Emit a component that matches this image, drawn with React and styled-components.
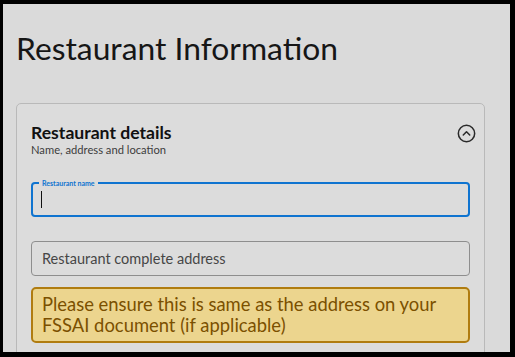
import React from 'react'
import styled, { createGlobalStyle } from 'styled-components'

const GlobalStyle = createGlobalStyle`
  html, body {
    margin: 0;
    padding: 0;
    background: #000;
  }
  * { box-sizing: border-box; }
`

export const Screen = styled.div`
  margin: 4px 5px 0 3px;
  height: 348px;
  overflow: hidden;
  background: #dadada;
  padding: 22px 25px 0 13px;
  font-family: Lato, "Open Sans", sans-serif;
`

export const PageTitle = styled.h1`
  margin: 0 0 33px 0;
  font-size: 31.8px;
  font-weight: 400;
  line-height: 44px;
  color: #161616;
`

export const Card = styled.section`
  border: 1px solid #b9b9b9;
  border-radius: 5px;
  padding: 19px 14px 20px 14px;
  background: #dcdcdc;
`

export const CardHeader = styled.div`
  display: flex;
  justify-content: space-between;
  align-items: flex-start;
  margin-bottom: 25px;
`

export const HeadText = styled.div`
  display: flex;
  flex-direction: column;
`

export const CardTitle = styled.h2`
  margin: 0;
  font-size: 17.6px;
  font-weight: 700;
  line-height: 20px;
  color: #111;
`

export const CardSub = styled.p`
  margin: 0;
  font-size: 11.2px;
  line-height: 14px;
  color: #3c3c3c;
`

export const ToggleButton = styled.button`
  border: none;
  background: none;
  padding: 0;
  margin: 0 -6px 0 0;
  width: 20px;
  height: 20px;
  display: flex;
  align-items: center;
  justify-content: center;
  cursor: pointer;
`

export const Field = styled.div`
  position: relative;
  height: ${p => p.$height || 34}px;
  border: ${p => (p.$focused ? '2px solid #0f74d0' : '1px solid #8e8e8e')};
  border-radius: 4px;
  display: flex;
  align-items: center;
  padding: 0 ${p => (p.$focused ? 8 : 10)}px;
  margin-bottom: ${p => p.$gap || 0}px;
`

export const FloatLabel = styled.span`
  position: absolute;
  top: -5px;
  left: 6px;
  padding: 0 3px;
  background: #dcdcdc;
  font-size: 7px;
  line-height: 8px;
  font-weight: 700;
  color: #0f74d0;
`

export const Caret = styled.span`
  width: 1px;
  height: 17px;
  background: #111;
`

export const Placeholder = styled.span`
  font-size: 14.5px;
  color: #464646;
`

export const Notice = styled.div`
  background: #ecd58e;
  border: 2px solid #b07c10;
  border-radius: 5px;
  padding: 5px 9px 5px 9px;
  color: #7b5000;
  font-size: 18.4px;
  line-height: 21px;
`

function ChevronCircle() {
  return (
    <svg width="19" height="19" viewBox="0 0 20 20" fill="none" stroke="#2a2a2a" strokeWidth="1.6" strokeLinecap="round" strokeLinejoin="round">
      <circle cx="10" cy="10" r="8.6" />
      <path d="M6.6 11.6 L10 8.2 L13.4 11.6" />
    </svg>
  )
}

function App() {
  return (
    <>
      <GlobalStyle />
      <Screen>
        <PageTitle>Restaurant Information</PageTitle>
        <Card>
          <CardHeader>
            <HeadText>
              <CardTitle>Restaurant details</CardTitle>
              <CardSub>Name, address and location</CardSub>
            </HeadText>
            <ToggleButton aria-label="collapse">
              <ChevronCircle />
            </ToggleButton>
          </CardHeader>
          <Field $focused $height={35} $gap={24}>
            <FloatLabel>Restaurant name</FloatLabel>
            <Caret />
          </Field>
          <Field $height={35} $gap={11}>
            <Placeholder>Restaurant complete address</Placeholder>
          </Field>
          <Notice>
            Please ensure this is same as the address on your<br />
            FSSAI document (if applicable)
          </Notice>
        </Card>
      </Screen>
    </>
  )
}

export default App
